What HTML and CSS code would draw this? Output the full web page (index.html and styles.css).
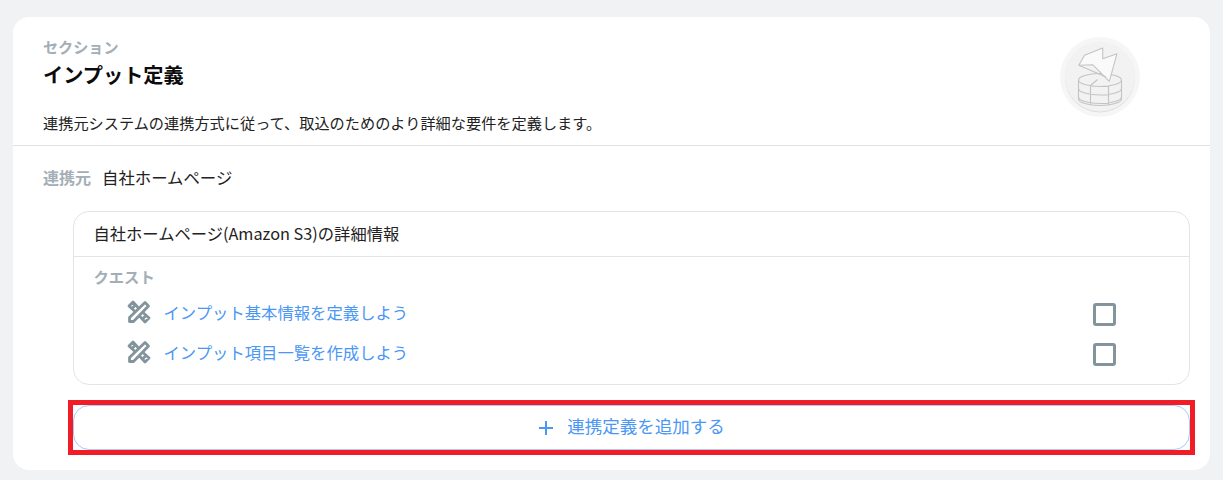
FILE: index.html
```html
<!DOCTYPE html>
<html lang="ja">
<head>
<meta charset="utf-8">
<title>インプット定義</title>
<link rel="stylesheet" href="styles.css">
</head>
<body>
<svg class="defs" width="0" height="0" aria-hidden="true">
  <symbol id="tools" viewBox="0 0 24 24">
    <path d="M2.500 21.500v-4L18 2.500l3.500 3.500L6.500 21.500z"/>
    <path d="M11 7.500L6 2 2 6l5.500 5"/>
    <path d="M7.500 6l-1.800 1.800"/>
    <path d="M16.500 13L22 18l-4 4-5-5.500"/>
    <path d="M18.300 16.200l-1.800 1.800"/>
  </symbol>
</svg>
<main class="card">
  <header class="head">
    <div class="head-text">
      <div class="eyebrow">セクション</div>
      <h1 class="title">インプット定義</h1>
      <p class="desc">連携元システムの連携方式に従って、取込のためのより詳細な要件を定義します。</p>
    </div>
    <svg class="badge" width="80" height="80" viewBox="0 0 80 80" aria-hidden="true">
      <circle cx="40" cy="40" r="40" fill="#f6f6f6"/>
      <circle cx="40" cy="40.500" r="35" fill="#dedede"/>
      <circle cx="40" cy="39.500" r="35" fill="#f2f2f2"/>
      <g fill="#f2f2f2" stroke="#c4c4c4" stroke-width="1.1" stroke-linejoin="round">
        <path d="M18.500 43c0-3.500 9.500-6.500 21.500-6.500s21.500 3 21.500 6.500v19c0 3.500-9.500 6.500-21.500 6.500s-21.500-3-21.500-6.500z"/>
        <path d="M18.500 43c0 3.500 9.500 6.500 21.500 6.500s21.500-3 21.500-6.500M18.500 51.500c0 3.500 9.500 6.500 21.500 6.500s21.500-3 21.500-6.500M18.500 60c0 3.500 9.500 6.500 21.500 6.500s21.500-3 21.500-6.500M30.500 48.500v19.500M48.500 48.500v19.500M30.500 48.500l7-6" fill="none"/>
        <path d="M24.500 18.300L42.700 11l0 10.700L57 16.700 49.300 44.300 32.700 27.700 18.800 28.300z" fill="#fafafa"/>
        <path d="M18.800 28.300L46 40" fill="none"/>
      </g>
    </svg>
  </header>
  <section class="body">
    <div class="source">
      <span class="source-label">連携元</span>
      <span class="source-name">自社ホームページ</span>
    </div>
    <div class="panel">
      <div class="panel-title">自社ホームページ(Amazon S3)の詳細情報</div>
      <div class="panel-body">
        <div class="quest-label">クエスト</div>
        <ul class="quests">
          <li class="quest">
            <svg class="quest-icon" width="24" height="24" viewBox="0 0 24 24" aria-hidden="true"><use href="#tools"/></svg>
            <a class="quest-link" href="#">インプット基本情報を定義しよう</a>
            <span class="check"></span>
          </li>
          <li class="quest">
            <svg class="quest-icon" width="24" height="24" viewBox="0 0 24 24" aria-hidden="true"><use href="#tools"/></svg>
            <a class="quest-link" href="#">インプット項目一覧を作成しよう</a>
            <span class="check"></span>
          </li>
        </ul>
      </div>
    </div>
    <div class="add-wrap">
      <button class="add" type="button">
        <svg class="plus" width="16" height="16" viewBox="0 0 16 16" aria-hidden="true"><path d="M8 1v14M1 8h14" stroke="#4a97f5" stroke-width="2" fill="none"/></svg>
        <span>連携定義を追加する</span>
      </button>
      <div class="highlight"></div>
    </div>
  </section>
</main>
</body>
</html>
```
FILE: styles.css
```css
* { box-sizing: border-box; }
html, body { height: 100%; }
body {
  margin: 0;
  padding: 17px 13px 10px;
  background: #f0f2f4;
  font-family: "Noto Sans CJK JP", "Noto Sans", sans-serif;
  color: #111;
  overflow: hidden;
}
.defs { position: absolute; }
.card {
  height: 453px;
  background: #fff;
  border-radius: 16px;
}
.head {
  height: 129px;
  padding: 19px 70px 0 30px;
  display: flex;
  justify-content: space-between;
  border-bottom: 1px solid #dfe1e3;
}
.eyebrow { font-size: 15.1px; line-height: 20px; font-weight: 700; color: #a3aeb6; }
.title { margin: 7px 0 0; font-size: 20.2px; line-height: 24px; font-weight: 700; color: #0c0c0c; }
.desc { margin: 24px 0 0; font-size: 15.2px; line-height: 22px; color: #222; }
.badge { margin-top: 1px; }
.body { padding: 19px 20px 0 30px; }
.source { display: flex; align-items: center; gap: 11px; height: 24px; }
.source-label { font-size: 16px; font-weight: 700; color: #a3aeb6; }
.source-name { font-size: 16.4px; color: #222; }
.panel {
  margin: 22px 0 0 30px;
  height: 174px;
  border: 1px solid #e2e4e7;
  border-radius: 16px;
}
.panel-title {
  height: 45px;
  padding-left: 19.5px;
  font-size: 16.3px;
  line-height: 42px;
  color: #222;
  border-bottom: 1px solid #e2e4e7;
}
.panel-body { padding: 8px 73px 0 19.5px; }
.quest-label { font-size: 15.3px; line-height: 22px; font-weight: 700; color: #a3aeb6; }
.quests { list-style: none; margin: 5px 0 0; padding: 0 0 0 33px; }
.quest { display: flex; align-items: center; height: 40px; }
.quest-icon {
  fill: none;
  stroke: #84949c;
  stroke-width: 2.8;
  stroke-linecap: round;
  stroke-linejoin: round;
  margin-right: 13px;
}
.quest-link { font-size: 16.35px; color: #4a97f5; text-decoration: none; }
.check {
  margin: 4px 0 0 auto;
  width: 23px;
  height: 23px;
  border: 3px solid #84949c;
  border-radius: 3px;
}
.add-wrap { position: relative; margin: 20px 0 0 30px; }
.add {
  width: 100%;
  height: 45px;
  padding: 0 0 5px;
  display: flex;
  align-items: center;
  justify-content: center;
  gap: 13px;
  background: #fff;
  border: 1px solid #a6cbfa;
  border-radius: 16px;
  font: inherit;
  font-size: 17.5px;
  color: #4a97f5;
}
.plus { position: relative; top: 3px; }
.highlight {
  position: absolute;
  inset: -5px;
  border: 5px solid #f01c26;
  pointer-events: none;
}
```
